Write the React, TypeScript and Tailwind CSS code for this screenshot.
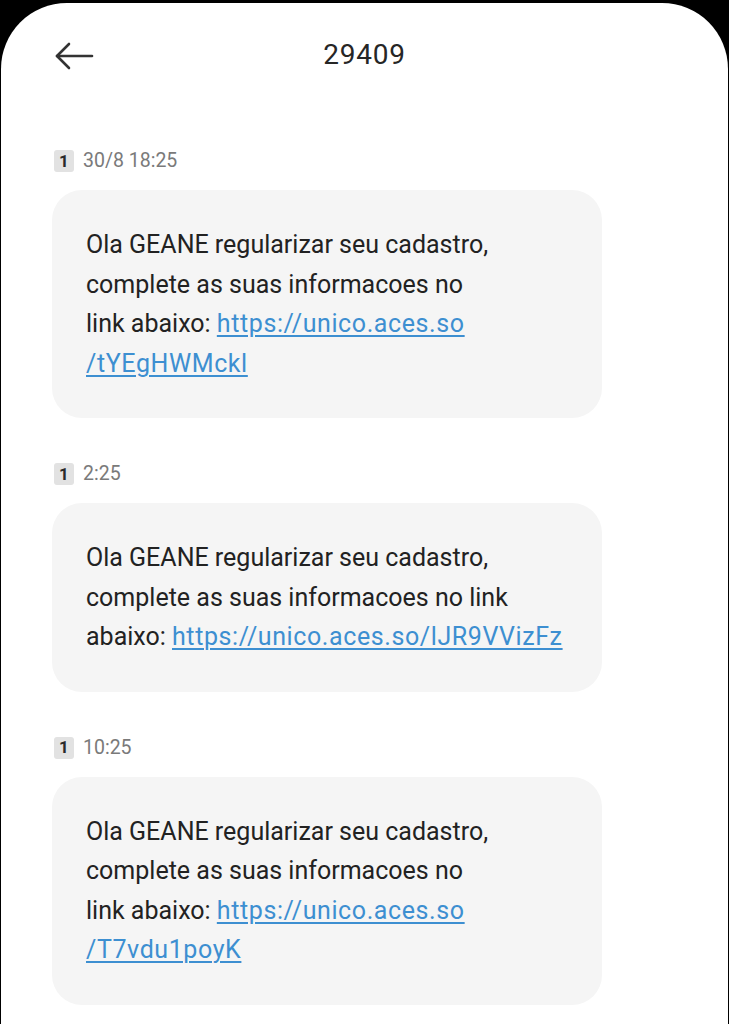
import React, { FC } from "react";

type Sms = {
	time: string;
	lines: React.ReactNode[];
};

const Link: FC<{ children: React.ReactNode }> = ({ children }) => (
	<span className="text-[#3d8fd1] tracking-[0.6px] underline decoration-[1.5px] underline-offset-[3px]">{children}</span>
);

const messages: Sms[] = [
	{
		time: "30/8 18:25",
		lines: [
			"Ola GEANE regularizar seu cadastro,",
			"complete as suas informacoes no",
			<>
				link abaixo: <Link>https://unico.aces.so</Link>
			</>,
			<Link>/tYEgHWMckl</Link>,
		],
	},
	{
		time: "2:25",
		lines: [
			"Ola GEANE regularizar seu cadastro,",
			"complete as suas informacoes no link",
			<>
				abaixo: <Link>https://unico.aces.so/lJR9VVizFz</Link>
			</>,
		],
	},
	{
		time: "10:25",
		lines: [
			"Ola GEANE regularizar seu cadastro,",
			"complete as suas informacoes no",
			<>
				link abaixo: <Link>https://unico.aces.so</Link>
			</>,
			<Link>/T7vdu1poyK</Link>,
		],
	},
];

const BackArrow: FC = () => (
	<svg width="40" height="30" viewBox="0 0 40 30" fill="none" stroke="#333" strokeWidth="2.6" strokeLinecap="round" strokeLinejoin="round">
		<path d="M3 15 H38" />
		<path d="M15 3 L3 15 L15 27" />
	</svg>
);

export default function App() {
	return (
		<div className="w-[729px] h-[1024px] bg-black pt-[3px] px-[1px] overflow-hidden" style={{ fontFamily: "Roboto, 'Noto Sans', sans-serif" }}>
			<div className="h-full bg-white rounded-t-[66px]">
				{/* Header */}
				<div className="relative flex items-center justify-center h-[104px]">
					<div className="absolute left-[53px] top-[38px]">
						<BackArrow />
					</div>
					<span className="text-[28px] text-[#262626] font-normal tracking-[0.8px]">29409</span>
				</div>

				{/* Messages */}
				<div className="flex flex-col pl-[51px] pt-[43px]">
					{messages.map((msg, idx) => (
						<div key={idx} className="flex flex-col mb-[45px]">
							<div className="flex items-center h-[22px] gap-[9px] mb-[18px]">
								<span className="flex items-center justify-center w-[20px] h-[22px] ml-[2px] rounded-[3px] bg-[#e2e2e2] text-[17px] leading-none font-bold text-[#2a2a2a]">
									1
								</span>
								<span className="text-[19.5px] text-[#7a7a7a]">{msg.time}</span>
							</div>
							<div className="w-[550px] bg-[#f5f5f5] rounded-[30px] px-[34px] py-[35px] text-[25px] leading-[39.5px] text-[#222]">
								{msg.lines.map((line, i) => (
									<div key={i} className="whitespace-nowrap">
										{line}
									</div>
								))}
							</div>
						</div>
					))}
				</div>
			</div>
		</div>
	);
}
